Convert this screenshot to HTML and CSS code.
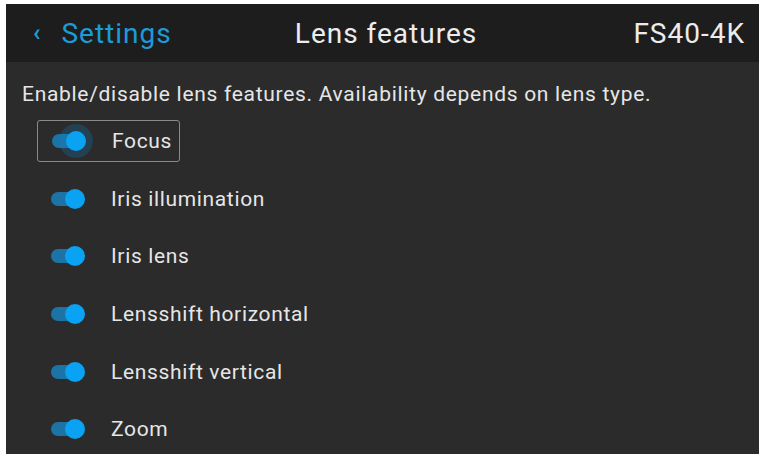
FILE: index.html
```html
<!DOCTYPE html>
<html lang="en">
<head>
  <meta charset="UTF-8">
  <meta name="viewport" content="width=device-width, initial-scale=1.0">
  <title>Lens features</title>
  <link rel="stylesheet" href="styles.css">
</head>
<body>

  <div class="pantalla">
    <div class="cabecera">
      <div class="volver"><span class="chevron">‹</span> Settings</div>
      <div class="titulo">Lens features</div>
      <div class="modelo">FS40-4K</div>
    </div>

    <div class="descripcion">Enable/disable lens features. Availability depends on lens type.</div>

    <div class="lista">
      <div class="fila activa"><span class="interruptor"></span><span class="etiqueta">Focus</span></div>
      <div class="fila"><span class="interruptor"></span><span class="etiqueta">Iris illumination</span></div>
      <div class="fila"><span class="interruptor"></span><span class="etiqueta">Iris lens</span></div>
      <div class="fila"><span class="interruptor"></span><span class="etiqueta">Lensshift horizontal</span></div>
      <div class="fila"><span class="interruptor"></span><span class="etiqueta">Lensshift vertical</span></div>
      <div class="fila"><span class="interruptor"></span><span class="etiqueta">Zoom</span></div>
    </div>
  </div>

</body>
</html>
```

FILE: styles.css
```css
body {
  margin: 0;
  padding: 4px 0 0 6px;
  background-color: #fff;
  font-family: Roboto, "Liberation Sans", sans-serif;
  overflow: hidden;
}
.pantalla {
  width: 753px;
  height: 450px;
  background-color: #2b2b2b;
  color: #e6e6e6;
}
.cabecera {
  height: 58px;
  background-color: #1d1d1d;
  display: flex;
  align-items: center;
  justify-content: space-between;
  padding: 0 14px 0 27px;
  font-size: 28px;
  letter-spacing: 1px;
}
.volver {
  color: #1d9bd8;
  width: 210px;
}
.chevron {
  display: inline-block;
  margin-right: 12px;
  font-size: 24px;
  font-weight: bold;
  position: relative;
  top: -2px;
}
.titulo {
  color: #ececec;
  margin-right: 6px;
}
.modelo {
  color: #ececec;
  width: 210px;
  text-align: right;
}
.descripcion {
  font-size: 21px;
  letter-spacing: 0.7px;
  padding: 20px 0 0 16px;
  height: 40px;
}
.lista {
  display: flex;
  flex-direction: column;
  padding-left: 31px;
}
.fila {
  height: 57.6px;
  display: flex;
  align-items: center;
  font-size: 21px;
  letter-spacing: 0.65px;
}
.fila:first-child {
  height: 42px;
  margin-top: -2px;
  margin-bottom: 8px;
  width: 143px;
  border: 1px solid #8a8a8a;
  border-radius: 3px;
  box-sizing: border-box;
}
.interruptor {
  position: relative;
  width: 33px;
  height: 14px;
  margin-left: 14px;
  margin-right: 27px;
  border-radius: 7px;
  background-color: #1b73a6;
}
.interruptor::after {
  content: "";
  position: absolute;
  right: -1px;
  top: -3px;
  width: 20px;
  height: 20px;
  border-radius: 50%;
  background-color: #0aa2f2;
}
.activa .interruptor::after {
  box-shadow: 0 0 0 7px rgba(10, 130, 200, 0.25);
}
```
